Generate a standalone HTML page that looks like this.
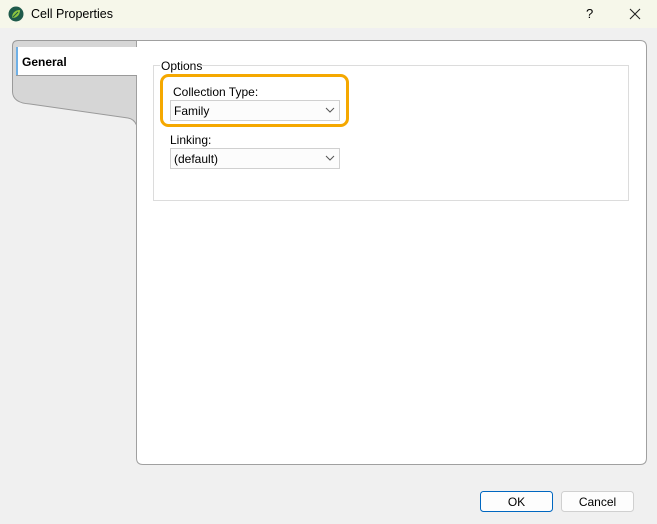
<!DOCTYPE html>
<html><head><style>
body{margin:0;width:657px;height:524px;background:#f0f0f0;font-family:"Liberation Sans",sans-serif;font-size:12px;position:relative;overflow:hidden;color:#000}
.a{position:absolute}
</style></head><body>
<div class="a" style="left:0;top:0;width:657px;height:28px;background:#f6f7ea"></div>
<svg class="a" style="left:8px;top:6px" width="16" height="16"><circle cx="8" cy="8" r="7.5" fill="#1e5a4a"/><path d="M4 12 C4 7 7 4 12 4 C12 9 9 12 4 12Z" fill="#8fc63f"/><path d="M4.5 11.5 L10 6" stroke="#1e5a4a" stroke-width="1"/></svg>
<div class="a" style="left:31px;top:7px;font-size:12.5px">Cell Properties</div>
<div class="a" style="left:586px;top:6px;font-size:13px">?</div>
<svg class="a" style="left:629px;top:8px" width="12" height="12"><path d="M1 1L11 11M11 1L1 11" stroke="#222" stroke-width="1.1"/></svg>
<svg class="a" style="left:0;top:0" width="657" height="524">
<path d="M136.5 125 Q134 119 128 118 L30 104 Q13 103 12.5 92 L12.5 46 Q12.5 40.5 18 40.5 L136.5 40.5" fill="#d6d6d6" stroke="#9a9a9a" stroke-width="1"/>
<path d="M136.5 40.5 L640 40.5 Q646.5 40.5 646.5 47 L646.5 458 Q646.5 464.5 640 464.5 L143 464.5 Q136.5 464.5 136.5 458 Z" fill="#fff" stroke="#a0a0a0"/>
<rect x="16" y="47" width="121" height="28" fill="#fff"/>
<line x1="16" y1="75.5" x2="137" y2="75.5" stroke="#9a9a9a"/>
<rect x="16" y="47" width="2" height="28" fill="#6fb0e6"/>
<rect x="153.5" y="65.5" width="475" height="135" fill="none" stroke="#dcdcdc"/>
<rect x="160" y="60" width="40" height="10" fill="#fff"/>
<rect x="161.5" y="75.5" width="186" height="50" rx="7" fill="#fff" stroke="#f5a800" stroke-width="3"/>
<rect x="170.5" y="100.5" width="169" height="20" fill="#fcfcfc" stroke="#d0d0d0"/>
<rect x="170.5" y="148.5" width="169" height="20" fill="#fcfcfc" stroke="#d0d0d0"/>
<path d="M326 108 L330 112 L334 108" fill="none" stroke="#555"/>
<path d="M326 156 L330 160 L334 156" fill="none" stroke="#555"/>
<rect x="480.5" y="491.5" width="72" height="20" rx="3" fill="#fdfdfd" stroke="#0067c0"/>
<rect x="561.5" y="491.5" width="72" height="20" rx="3" fill="#fdfdfd" stroke="#d0d0d0"/>
</svg>
<div class="a" style="left:22px;top:55px;font-weight:bold">General</div>
<div class="a" style="left:161px;top:59px">Options</div>
<div class="a" style="left:173px;top:85px">Collection Type:</div>
<div class="a" style="left:174px;top:104px">Family</div>
<div class="a" style="left:170px;top:133px">Linking:</div>
<div class="a" style="left:174px;top:152px">(default)</div>
<div class="a" style="left:480px;top:495px;width:73px;text-align:center">OK</div>
<div class="a" style="left:561px;top:495px;width:73px;text-align:center">Cancel</div>
</body></html>
